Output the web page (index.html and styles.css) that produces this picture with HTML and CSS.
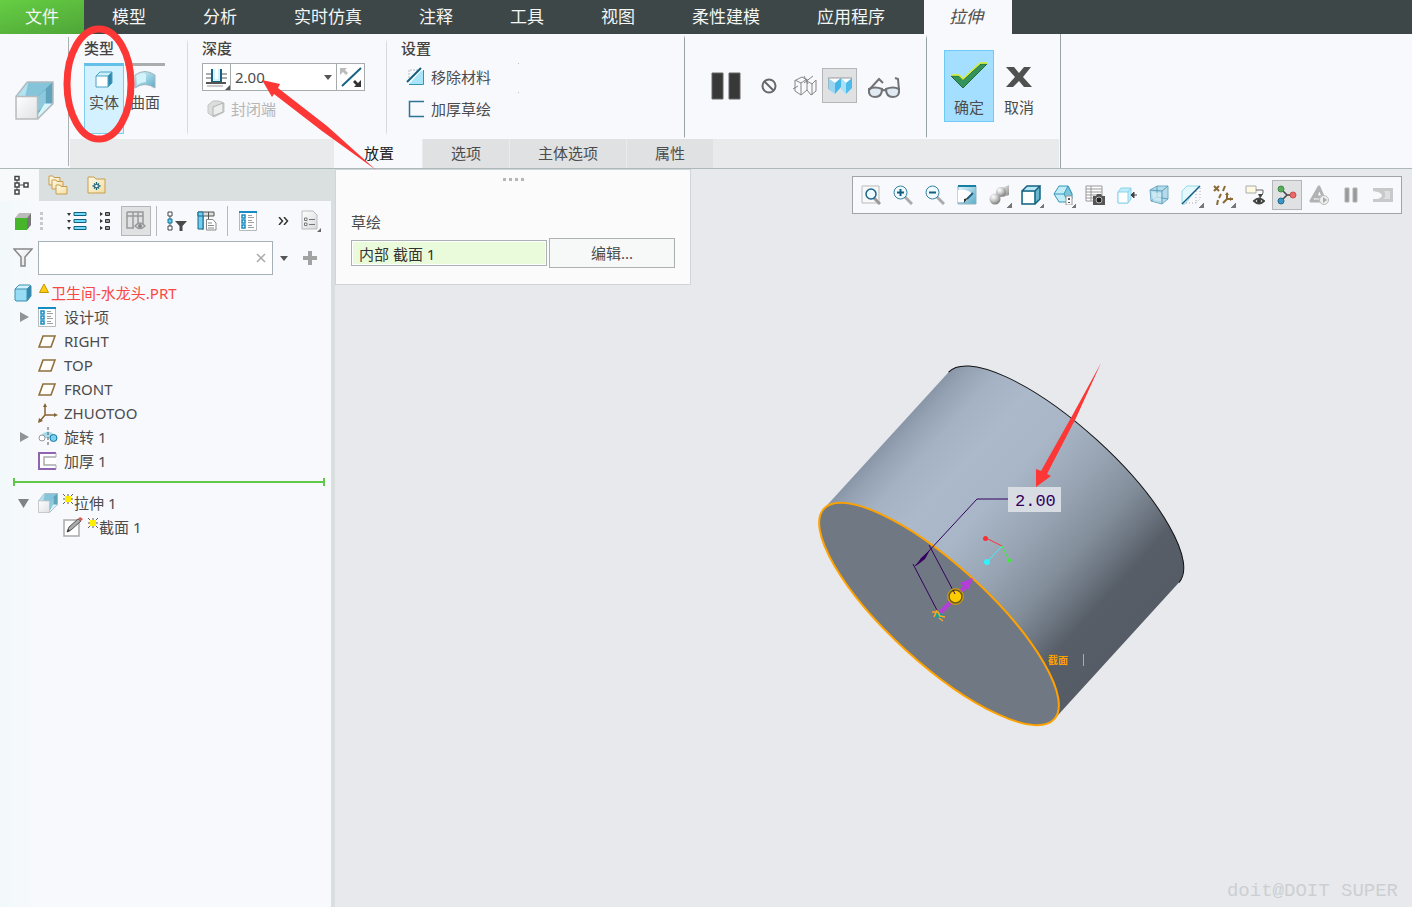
FILE: index.html
```html
<!DOCTYPE html>
<html lang="zh-CN">
<head>
<meta charset="utf-8">
<title>拉伸</title>
<link rel="stylesheet" href="styles.css">
</head>
<body>
<svg class="defs" aria-hidden="true">
  <defs>
    <linearGradient id="blueFade" x1="0" y1="0" x2="1" y2="1"><stop offset="0" stop-color="#e4f7fc"/><stop offset="1" stop-color="#59abc9"/></linearGradient>
    <linearGradient id="whiteFade" x1="0" y1="0" x2="1" y2="1"><stop offset="0" stop-color="#fff"/><stop offset="1" stop-color="#dfe1e3"/></linearGradient>
    <radialGradient id="ballFade" cx=".35" cy=".3" r=".75"><stop offset="0" stop-color="#fff"/><stop offset=".45" stop-color="#ccc"/><stop offset="1" stop-color="#777"/></radialGradient>
    <linearGradient id="greyFade" x1="0" y1="0" x2="1" y2="1"><stop offset="0" stop-color="#fff"/><stop offset="1" stop-color="#888"/></linearGradient>
    <linearGradient id="pageFade" x1="0" y1="0" x2="1" y2="1"><stop offset="0" stop-color="#fff"/><stop offset="1" stop-color="#d5dbdd"/></linearGradient>
    <linearGradient id="folderFade" x1="0" y1="0" x2="1" y2="1"><stop offset="0" stop-color="#fffbe9"/><stop offset="1" stop-color="#f3dda0"/></linearGradient>
    <linearGradient id="bodyShade" x1="0" x2="1">
      <stop offset="0" stop-color="#8896a7"/><stop offset=".04" stop-color="#94a2b4"/><stop offset=".12" stop-color="#a4b2c4"/><stop offset=".24" stop-color="#abb9cb"/><stop offset=".38" stop-color="#a8b6c7"/><stop offset=".55" stop-color="#97a3b2"/><stop offset=".69" stop-color="#838e9b"/><stop offset=".79" stop-color="#6a737e"/><stop offset=".86" stop-color="#575e68"/><stop offset="1" stop-color="#555c66"/>
    </linearGradient>
    <symbol id="extrude" viewBox="0 0 38 38">
      <path d="M12 1H37V22L22 37V15H1Z" fill="#9acfe2"/><path d="M12 1H37L22 15H1Z" fill="#b3e2f1"/><path d="M13 1H37L22 15H10Z" fill="#86c4da"/><path d="M37 1V22L22 15Z" fill="#5fa3bc"/><path d="M37 1V22L22 37V15Z" fill="#5fa3bc"/><path d="M22 15L30 8V23L22 30Z" fill="#8cc9de"/><path d="M22 37V33L29 22H37Z" fill="#d8f4fb"/><path d="M12 1H37V22L22 37M1 15L12 1" fill="none" stroke="#b2babf" stroke-width="1.5"/><path d="M1 15H22V37H1Z" fill="url(#whiteFade)" stroke="#b9bcbe" stroke-width="1.5"/>
    </symbol>
    <symbol id="cube" viewBox="0 0 18 18"><path d="M1 5L5 1H17L13 5Z" fill="#d0f2fc"/><path d="M17 1V12L13 17V5Z" fill="#3288aa"/><path d="M1 5H13V17H1Z" fill="#96dcf5"/><path d="M1 5V16L2 17H13L17 12V2L16 1H5ZM1 5H13V17M13 5L17 1" fill="none" stroke="#3f8fae"/></symbol>
    <symbol id="list" viewBox="0 0 18 20"><path d="M.5 .5H17.5V19.5H.5Z" fill="#fff" stroke="#b4babd"/><path d="M0 1H18" stroke="#168cc4" stroke-width="2"/><g fill="#fff" stroke="#168cc4" stroke-width="1.5"><path d="M3 4H6V7H3ZM3 9H6V12H3ZM3 14H6V17H3Z"/></g><path d="M9 4.500H13M9 6.500H15M9 9.500H13M9 11.500H15M9 14.500H13M9 16.500H15" stroke="#9ba1a5"/></symbol>
    <symbol id="plane" viewBox="0 0 18 13"><path d="M5 1H17L13 12H1Z" fill="#fffefa" stroke="#8f6f3d" stroke-width="1.6"/></symbol>
    <symbol id="spark" viewBox="0 0 10 10"><path d="M5 0V10M0 5H10M0 0L10 10M10 0L0 10" stroke="#5f5f4c" stroke-width="1"/><path d="M2 2H8V8H2Z" fill="#ffee00"/></symbol>
    <symbol id="corner" viewBox="0 0 5 5"><path d="M5 0V5H0Z" fill="#686868"/></symbol>
    <symbol id="folder" viewBox="0 0 13 11"><path d="M1 2V1H5L6 2.500H12V10H1Z" fill="url(#folderFade)" stroke="#c69d50"/></symbol>
  </defs>
</svg>

<div class="app">
  <nav class="menu">
    <a class="menu-item file" href="#">文件</a><a class="menu-item" href="#">模型</a><a class="menu-item" href="#">分析</a><a class="menu-item" href="#">实时仿真</a><a class="menu-item" href="#">注释</a><a class="menu-item" href="#">工具</a><a class="menu-item" href="#">视图</a><a class="menu-item" href="#">柔性建模</a><a class="menu-item" href="#">应用程序</a><a class="menu-item current" href="#">拉伸</a>
  </nav>

  <header class="ribbon">
    <div class="feature"><svg width="39" height="39"><use href="#extrude"/></svg></div>
    <div class="dashboard">
      <div class="groups">
        <section class="group kind">
          <h2>类型</h2>
          <div class="kinds">
            <button class="kind-btn on"><svg width="18" height="18" viewBox="0 0 18 18"><path d="M1 5L5 1H17L13 5Z" fill="#cdeffc"/><path d="M17 1V12L13 16V5Z" fill="#3288aa"/><path d="M1 5H13V16H1Z" fill="#fff"/><path d="M1 5V16H13L17 12V1H5ZM1 5H13V16M13 5L17 1" fill="none" stroke="#48a3c2"/></svg>实体</button>
            <button class="kind-btn"><svg width="22" height="18" viewBox="0 0 22 18"><path d="M1 17V4Q11-3 21 4V17Q11 10 1 17Z" fill="url(#blueFade)" stroke="#9eb6c0"/><path d="M3 14V5Q8 1 12 3V11Q7 11 3 14Z" fill="#d3f4fb"/></svg>曲面</button>
          </div>
        </section>
        <section class="group depth">
          <h2>深度</h2>
          <div class="combo">
            <button class="depth-type" aria-label="深度类型"><svg width="27" height="26" viewBox="0 0 27 26"><path d="M3 10H24M3 14H24" stroke="#a9adaf" stroke-width="2"/><path d="M9 5V18H18V5" fill="#fff" stroke="#16617f" stroke-width="2"/><path d="M11 5V16H16V5" fill="none" stroke="#a5e6fa"/><path d="M3 19H23" stroke="#555" stroke-width="2"/><path d="M4 22H20" stroke="#999"/><path d="M27 21V26H22Z" fill="#555"/></svg></button>
            <input value="2.00" aria-label="深度值">
            <button class="drop" aria-label="展开"><svg width="8" height="5"><path d="M0 0H8L4 5Z" fill="#555"/></svg></button>
            <button class="flip" aria-label="反向"><svg width="26" height="24" viewBox="0 0 26 24"><path d="M4 21L23 3" stroke="#176486" stroke-width="2"/><path d="M2 3H9L7 5L10 8L8 10L5 7L2 10Z" fill="#bbb"/><path d="M23 22H16L18 20L15 17L17 15L20 18L23 15Z" fill="#333"/></svg></button>
          </div>
          <button class="line-btn" disabled><svg width="18" height="18" viewBox="0 0 18 18"><path d="M1 5L6 1Q12 0 17 3V12L7 17L1 13Z" fill="#dcdddd" stroke="#c4c5c6"/><path d="M6 7L16 3V12L6 16Z" fill="#ededee" stroke="#b0b1b2"/></svg>封闭端</button>
        </section>
        <section class="group setup">
          <h2>设置</h2>
          <div class="setup-row">
            <div>
              <button class="line-btn"><svg width="19" height="20" viewBox="0 0 19 20"><path d="M3 14V3H12" fill="none" stroke="#bbb" stroke-dasharray="2 1"/><path d="M5 15L15 4H17V17H3Z" fill="#a9e5f8"/><path d="M17.500 3V17.500H3" fill="none" stroke="#3692b5"/><path d="M1 15L15 1" stroke="#14607e" stroke-width="2"/></svg>移除材料</button>
              <button class="line-btn"><svg width="19" height="18" viewBox="0 0 19 18"><path d="M18 1.500H3.500V16.500H18" fill="none" stroke="#2a7597" stroke-width="1.500"/></svg>加厚草绘</button>
            </div>
            <i class="dots"></i>
          </div>
        </section>
        <section class="group controls">
          <button class="tool pause" aria-label="暂停"><svg width="30" height="28"><path d="M1 1H12V27H1ZM18 1H29V27H18Z" fill="#383838" stroke="#666"/></svg></button>
          <button class="tool small" aria-label="无预览"><svg width="16" height="16"><circle cx="8" cy="8" r="6.500" fill="none" stroke="#686868" stroke-width="2"/><path d="M3 3L13 13" stroke="#686868" stroke-width="2"/></svg></button>
          <button class="tool xray" aria-label="分离"><svg width="26" height="22" viewBox="0 0 26 22"><path d="M3 5L9 8L15 4V15L9 20L3 16ZM9 8V20M4 5L10 2L15 5M15 6L20 9L24 5V16L19 20L15 15M20 9V20M12 1L16 9M21 1L12 8M1 14L6 11" fill="none" stroke="#858585"/></svg></button>
          <button class="tool on" aria-label="连接"><svg width="24" height="18" viewBox="0 0 24 18"><path d="M0 1H13L7 6ZM13 1H24L18 6Z" fill="#fff"/><path d="M0 1L7 6V17L0 12Z" fill="#98d5f0"/><path d="M13 1V10L7 17V6Z" fill="#46b5e7"/><path d="M13 1L18 6V17L13 12Z" fill="#a8e0f5"/><path d="M24 1V11L18 17V6Z" fill="#4dbceb"/><path d="M0 1H24M0 1V12M24 1V11" stroke="#999"/></svg></button>
          <button class="tool glasses" aria-label="预览"><svg width="34" height="22" viewBox="0 0 34 22"><path d="M2 12Q8 9 15 12Q15 20 8 20Q1 20 2 12ZM19 12Q26 9 32 12Q33 20 26 20Q19 20 19 12Z" fill="#e1eaf2" stroke="#707375" stroke-width="2"/><path d="M15 14Q17 12 19 14M2 13L12 2L16 6M32 13L31 2L28 1" fill="none" stroke="#707375" stroke-width="2"/></svg></button>
        </section>
        <section class="group finish">
          <button class="final ok"><svg width="38" height="28" viewBox="0 0 38 28"><path d="M1 14H9L13 18L31 2H37L13 26Z" fill="#32945a" stroke="#296b35"/><path d="M1 13H9L13 17L30 1H37" fill="none" stroke="#d6ef29" stroke-width="1.500"/></svg>确定</button>
          <button class="final"><svg width="26" height="22" viewBox="0 0 26 22"><path d="M0 1H8L13 7L18 1H25L17 11L26 21H18L13 15L7 21H0L9 11Z" fill="#505050"/></svg>取消</button>
        </section>
      </div>
      <div class="subtabs">
        <button class="subtab current">放置</button><button class="subtab">选项</button><button class="subtab">主体选项</button><button class="subtab">属性</button>
      </div>
    </div>
    <svg class="mark" width="380" height="171" viewBox="0 0 380 171" aria-hidden="true"><ellipse cx="99" cy="84" rx="32" ry="55" fill="none" stroke="#fc3735" stroke-width="7"/><path d="M262 80L280 84L278 88L327 126L376 170L322 131L274 94L272 97Z" fill="#fc3735"/></svg>
  </header>

  <main class="work">
    <aside class="side">
      <div class="side-tabs">
        <button class="side-tab current" aria-label="模型树"><svg width="16" height="20" viewBox="0 0 16 20"><path d="M4 3V17M4 10H12" stroke="#555"/><g fill="#fff" stroke="#444" stroke-width="1.500"><path d="M2 1.500H6V5H2ZM2 8H6V12H2ZM2 15H6V19H2ZM11 8H15V12H11Z"/></g></svg></button>
        <button class="side-tab" aria-label="文件夹"><svg width="20" height="20" viewBox="0 0 20 20"><use href="#folder" width="13" height="11"/><use href="#folder" x="3" y="4" width="13" height="11"/><use href="#folder" x="7" y="9" width="13" height="11"/></svg></button>
        <button class="side-tab" aria-label="收藏夹"><svg width="19" height="18" viewBox="0 0 19 18"><path d="M1 3V1H7L9 3H18V17H1Z" fill="url(#folderFade)" stroke="#c69d50"/><path d="M9.500 6V14M5.500 10H13.500M7 7.500L12 12.500M12 7.500L7 12.500" stroke="#1b6381" stroke-width="1.300"/><circle cx="9.500" cy="10" r="1.300" fill="#fff"/></svg></button>
      </div>
      <div class="side-tools">
        <button class="tool" aria-label="模型"><svg width="16" height="18" viewBox="0 0 16 18"><path d="M0 6L4 1H16L12 6Z" fill="#bbb"/><path d="M12 6L16 1V13L12 18Z" fill="#777"/><path d="M0 6H12V18H0Z" fill="#47b52a"/></svg></button>
        <i class="grip"></i>
        <button class="tool" aria-label="全部展开"><svg width="20" height="20" viewBox="0 0 20 20"><path d="M0 2H4L2 5ZM0 9H4L2 12ZM0 16H4L2 19Z" fill="#333"/><path d="M7 1.500H19V4.500H7ZM7 8.500H19V11.500H7ZM7 15.500H19V18.500H7Z" fill="#72dafa" stroke="#135f7e"/></svg></button>
        <button class="tool narrow" aria-label="全部折叠"><svg width="12" height="20" viewBox="0 0 12 20"><path d="M1 1L4 3L1 5ZM1 8L4 10L1 12ZM1 15L4 17L1 19Z" fill="#333"/><path d="M6.500 1.500H10.500V4.500H6.500ZM6.500 8.500H10.500V11.500H6.500ZM6.500 15.500H10.500V18.500H6.500Z" fill="#999" stroke="#333"/></svg></button>
        <button class="tool on spaced" aria-label="树列"><svg width="20" height="20" viewBox="0 0 20 20"><path d="M1 1H17V13M1 1V17H8M1 5H17M7 1V17M12 1V12" fill="none" stroke="#999" stroke-width="1.500"/><path d="M9 15Q14 9 19 15Q14 20 9 15Z" fill="#ddd" stroke="#999" stroke-width="1.500"/><circle cx="14" cy="15" r="2" fill="#888"/></svg></button>
        <i class="rule"></i>
        <button class="tool" aria-label="树过滤器"><svg width="20" height="20" viewBox="0 0 20 20"><path d="M3 3V18" stroke="#555"/><path d="M1 1H5V5H1ZM1 15H5V19H1Z" fill="#fff" stroke="#444"/><path d="M1 8H5V12H1Z" fill="#68c9ed" stroke="#11779e"/><path d="M8 10H20L15.500 15V20H12.500V15Z" fill="#4a4a4a"/></svg></button>
        <button class="tool" aria-label="树设置"><svg width="20" height="20" viewBox="0 0 20 20"><path d="M1 1H17V5H1ZM6 5V19M11.500 1V9" fill="#ddd" stroke="#555"/><path d="M1 1H6V18H1Z" fill="#70cef0" stroke="#166788"/><path d="M1 5H6" stroke="#166788"/><path d="M9.500 8.500H16L19 12V19H9.500Z" fill="#fff" stroke="#888"/><path d="M11 12H15M11 14.500H17M11 17H17" stroke="#888"/></svg></button>
        <i class="rule"></i>
        <button class="tool" aria-label="设计项"><svg width="18" height="20"><use href="#list"/></svg></button>
        <button class="tool narrow more" aria-label="更多"><svg width="11" height="8" viewBox="0 0 11 8"><path d="M1 0L4.500 4L1 8M6 0L9.500 4L6 8" fill="none" stroke="#333" stroke-width="1.500"/></svg></button>
        <button class="tool" aria-label="树选项"><svg width="20" height="22" viewBox="0 0 20 22"><path d="M1 1H12L16 5V19H1Z" fill="url(#pageFade)" stroke="#bbb"/><path d="M8 9.500H14M8 14.500H14" stroke="#777"/><path d="M3.500 8H6V10.500H3.500ZM3.500 13H6V15.500H3.500Z" fill="#fff" stroke="#777"/><use href="#corner" x="16" y="18" width="4" height="4"/></svg></button>
      </div>
      <div class="search">
        <button class="tool" aria-label="过滤"><svg width="20" height="20" viewBox="0 0 20 20"><path d="M1 1H19L12 9V18H8V9Z" fill="url(#whiteFade)" stroke="#888" stroke-width="1.500"/></svg></button>
        <div class="field"><input aria-label="搜索模型树"><button aria-label="清除"><svg width="10" height="10"><path d="M1 1L9 9M9 1L1 9" stroke="#aaa" stroke-width="1.500"/></svg></button></div>
        <button class="tool drop-btn" aria-label="搜索选项"><svg width="8" height="5"><path d="M0 0H8L4 5Z" fill="#555"/></svg></button>
        <button class="tool" aria-label="添加"><svg width="14" height="14"><path d="M5 0H9V5H14V9H9V14H5V9H0V5H5Z" fill="#a2a2a2"/></svg></button>
      </div>
      <ul class="tree">
        <li class="root"><svg width="18" height="18"><use href="#cube"/></svg><svg class="warn" width="10" height="10"><path d="M5 1L9.500 9.500H.5Z" fill="#ffcc13" stroke="#c59500"/></svg><span>卫生间-水龙头.PRT</span></li>
        <li><svg class="twist" width="10" height="12"><path d="M1 1L10 6L1 11Z" fill="#909395"/></svg><span class="ico"><svg width="18" height="20"><use href="#list"/></svg></span>设计项</li>
        <li><i class="twist"></i><span class="ico"><svg width="18" height="13"><use href="#plane"/></svg></span>RIGHT</li>
        <li><i class="twist"></i><span class="ico"><svg width="18" height="13"><use href="#plane"/></svg></span>TOP</li>
        <li><i class="twist"></i><span class="ico"><svg width="18" height="13"><use href="#plane"/></svg></span>FRONT</li>
        <li><i class="twist"></i><span class="ico"><svg width="20" height="20" viewBox="0 0 20 20"><path d="M7 2V12H18M7 12L2 18" fill="none" stroke="#866332" stroke-width="1.500"/><path d="M7 0L9 4H5ZM20 12L16 10V14ZM0 20L1 15L5 18Z" fill="#866332"/></svg></span>ZHUOTOO</li>
        <li><svg class="twist" width="10" height="12"><path d="M1 1L10 6L1 11Z" fill="#909395"/></svg><span class="ico"><svg width="20" height="20" viewBox="0 0 20 20"><path d="M3 8Q10 1 17 8L12 11H7Z" fill="#a4dcec"/><path d="M10 0V20" stroke="#555" stroke-dasharray="3 2"/><circle cx="4" cy="11" r="3" fill="#fff" stroke="#999"/><circle cx="15.500" cy="11" r="3.500" fill="#7ad1f2" stroke="#17799f"/></svg></span>旋转 1</li>
        <li><i class="twist"></i><span class="ico"><svg width="20" height="18" viewBox="0 0 20 18"><path d="M18 1H1V17H18" fill="#fff" stroke="#8f65b1" stroke-width="2"/><path d="M18 5H6V13H18" fill="#fff" stroke="#aaa" stroke-width="1.500"/><path d="M18 1V5M18 13V17" stroke="#aaa"/></svg></span>加厚 1</li>
        <li class="insert" aria-label="在此插入"></li>
        <li><svg class="twist" width="10" height="9" viewBox="0 0 10 9"><path d="M-1 0H10L4.500 9Z" fill="#808385"/></svg><span class="ico"><svg width="20" height="20"><use href="#extrude"/></svg></span><svg class="new" width="10" height="10"><use href="#spark"/></svg>拉伸 1</li>
        <li class="child"><span class="ico"><svg width="20" height="20" viewBox="0 0 20 20"><path d="M1 3H16V19H1Z" fill="#fff" stroke="#aaa" stroke-width="1.500"/><path d="M4 15L6 10L15 2L18 4L8 13Z" fill="#aaa" stroke="#555"/><path d="M4 15L5 12L7 14Z" fill="#333"/><path d="M15 2L17 0L20 2L18 4Z" fill="#d45d50"/></svg></span><svg class="new" width="10" height="10"><use href="#spark"/></svg>截面 1</li>
      </ul>
    </aside>

    <section class="canvas">
      <svg class="scene" viewBox="335 169 1077 738" preserveAspectRatio="xMidYMid meet">
        <g transform="translate(939 614) rotate(42.400)">
          <path d="M-156 0V-185A156 50 0 0 1 156-185V0Z" fill="url(#bodyShade)"/>
          <path d="M-156-185A156 50 0 0 1 156-185" fill="none" stroke="#111" stroke-width="1"/>
          <ellipse rx="156" ry="49" fill="#707883" stroke="#ffa200" stroke-width="2"/>
        </g>
        <path d="M1008 499H977L915 566M913 564L939 614M929 545L955 594" fill="none" stroke="#360060" stroke-width="1"/>
        <path d="M916 566L921 558L930 550L925 559Z" fill="#360060"/>
        <path d="M940 613L966 586" stroke="#b63dda" stroke-width="4"/><path d="M973 578L960 583L968 590Z" fill="#b63dda"/>
        <path d="M935 618L938 612L944 617M937 612L941 620" stroke="#13a39d" fill="none" stroke-width="2"/><path d="M932 612H938L940 616L945 617M937 610L934 617M939 618L943 621" fill="none" stroke="#ffa51e" stroke-width="1.500"/>
        <circle cx="955.500" cy="596.500" r="8" fill="#ddb21b" stroke="#bc9619"/><circle cx="955.500" cy="596.500" r="6.500" fill="#ffcc00" stroke="#6b591e" stroke-width="1.500"/><path d="M953 590L955 594" stroke="#360060"/>
        <path d="M986 538L1002 546" stroke="#ff3434"/><path d="M1002 546L987 562" stroke="#36f5f4"/><path d="M1002 546L1009 560" stroke="#36ef39"/>
        <circle cx="985.500" cy="538.500" r="2.500" fill="#fb3035"/><circle cx="987" cy="562" r="3" fill="#2ff3fc"/><circle cx="1009" cy="560.500" r="2" fill="#3bee31"/>
        <text class="section-label" x="1048" y="664">截面</text><path d="M1083.500 654V666" stroke="#ffa200"/>
        <path d="M1008 487H1061V512H1008Z" fill="#d8dde4"/><text class="dimension" x="1015" y="506">2.00</text>
        <path d="M1101 363L1072 416L1041 471L1036 469V487L1051 476L1047 474L1076 418Z" fill="#fc3735"/>
      </svg>

      <form class="placement">
        <i class="handle"></i>
        <label for="sketch">草绘</label>
        <div class="placement-row"><input id="sketch" value="内部 截面 1"><button type="button">编辑...</button></div>
      </form>

      <div class="view-tools">
        <button class="tool" aria-label="重新调整"><svg width="20" height="20" viewBox="0 0 20 20"><path d="M1 1H18V18H1Z" fill="#f8f8f8" stroke="#bbb"/><path d="M13 13L19 19" stroke="#999" stroke-width="3"/><circle cx="10" cy="9" r="5" fill="#eefaff" stroke="#176689" stroke-width="1.500"/></svg></button>
        <button class="tool" aria-label="放大"><svg width="20" height="20" viewBox="0 0 20 20"><path d="M12 12L19 19" stroke="#aaa" stroke-width="3"/><circle cx="7.500" cy="7.500" r="6.500" fill="#effaff" stroke="#36839f"/><path d="M4 7.500H11M7.500 4V11" stroke="#135e80" stroke-width="2"/></svg></button>
        <button class="tool" aria-label="缩小"><svg width="20" height="20" viewBox="0 0 20 20"><path d="M12 12L19 19" stroke="#aaa" stroke-width="3"/><circle cx="7.500" cy="7.500" r="6.500" fill="#effaff" stroke="#36839f"/><path d="M4 7.500H11" stroke="#135e80" stroke-width="2"/></svg></button>
        <button class="tool" aria-label="重画"><svg width="20" height="20" viewBox="0 0 20 20"><path d="M1 1H19V19H1Z" fill="url(#blueFade)" stroke="#8fb3c0"/><path d="M1 5Q11 4 15 9L8 17H1Z" fill="#fff"/><path d="M16 8L10 14" stroke="#175f7e" stroke-width="2"/><path d="M11 13L7 18L7 14Z" fill="#333"/><path d="M1 1H19" stroke="#167ea5" stroke-width="2"/></svg></button>
        <button class="tool flyout" aria-label="渲染"><svg width="20" height="20" viewBox="0 0 20 20"><path d="M11 4L20 0V10L14 12Z" fill="url(#greyFade)"/><circle cx="12" cy="7" r="5" fill="url(#ballFade)"/><circle cx="6" cy="14" r="5.500" fill="url(#ballFade)"/></svg></button>
        <button class="tool flyout" aria-label="显示样式"><svg width="20" height="20" viewBox="0 0 20 20"><path d="M1 6L6 1H19V14L14 19H1Z" fill="#b5e8f6"/><path d="M19 1V14L14 19V6Z" fill="#68b7cf"/><path d="M1 6H14V19H1ZM1 6L6 1H19L14 6M19 1V14L14 19" fill="none" stroke="#17617f" stroke-width="1.500"/><path d="M2 7H13V18H2Z" fill="#fff"/></svg></button>
        <button class="tool flyout" aria-label="已保存方向"><svg width="20" height="20" viewBox="0 0 20 20"><path d="M1 9L6 1H15L19 9L15 17H6Z" fill="#c2edf7" stroke="#3597b8"/><path d="M1 9H11L15 1L19 9V14L15 17L11 9" fill="#7bc6db" stroke="#3597b8"/><path d="M13 11H19V20H13Z" fill="#fff" stroke="#999"/><path d="M16 13V15M16 17V18" stroke="#555" stroke-width="2"/></svg></button>
        <button class="tool" aria-label="视图管理器"><svg width="20" height="20" viewBox="0 0 20 20"><path d="M1 1H17V16H1ZM1 4H17M1 7H17M1 10H17M1 13H17M6 1V16" fill="#fff" stroke="#999"/><path d="M8 11H11L12 9H16L17 11H20V20H8Z" fill="#555"/><circle cx="14" cy="15" r="3" fill="#222" stroke="#bbb"/></svg></button>
        <button class="tool" aria-label="截面"><svg width="20" height="18" viewBox="0 0 20 18"><path d="M1 6L4 2H14V13L11 17H1Z" fill="#c0edf9" stroke="#88d3ea"/><path d="M1 6H11V17H1ZM11 6L14 2" fill="#fff" stroke="#88d3ea"/><path d="M14 9H20M14 9L17 6V12Z" fill="#444" stroke="#444"/></svg></button>
        <button class="tool" aria-label="透视图"><svg width="20" height="20" viewBox="0 0 20 20"><path d="M1 5L8 1H19V14L13 19L2 16Z" fill="#b5dbeb" stroke="#72abc3"/><path d="M1 5L13 6V19M13 6L19 1M2 16L8 12L19 14M8 12V1" fill="none" stroke="#5d9fba"/><path d="M3 7L12 8V16L4 15Z" fill="#d5f0f8" opacity=".7"/></svg></button>
        <button class="tool flyout" aria-label="剪切"><svg width="20" height="20" viewBox="0 0 20 20"><path d="M1 6L6 1H18L4 19H1Z" fill="#e4f9fd" stroke="#94d8ea"/><path d="M15 6V18H4M19 3V14L15 18" fill="none" stroke="#aaa" stroke-dasharray="1 2"/><path d="M1 19L19 1" stroke="#165f80" stroke-width="1.500"/></svg></button>
        <button class="tool flyout" aria-label="基准显示"><svg width="20" height="20" viewBox="0 0 20 20"><path d="M1 1L6 6M6 1L1 6M12 1L10 6M8 9L6 13M5 15L4 20M14 8V14H20M14 14L10 18" fill="none" stroke="#8a6a34" stroke-width="2"/><path d="M14 7L16 10H12ZM20 14L17 12V16Z" fill="#8a6a34"/></svg></button>
        <button class="tool" aria-label="注释显示"><svg width="20" height="20" viewBox="0 0 20 20"><path d="M1 1H11V8H1Z" fill="#fff9e2" stroke="#aaa"/><path d="M11 5H18V8L15 13" fill="none" stroke="#666"/><path d="M13 9H18L15 13Z" fill="#444"/><path d="M9 16Q14 11 19 16Q14 21 9 16Z" fill="#fff" stroke="#444" stroke-width="2"/><circle cx="14" cy="16" r="2" fill="#333"/></svg></button>
        <button class="tool on" aria-label="旋转中心"><svg width="20" height="20" viewBox="0 0 20 20"><path d="M4 4L10 10L4 16M10 10H16" fill="none" stroke="#444" stroke-width="1.500"/><circle cx="4" cy="4" r="3" fill="#57ad59" stroke="#468949"/><circle cx="4" cy="16" r="3" fill="#3897c7" stroke="#27698b"/><circle cx="16" cy="10" r="3" fill="#ed6966" stroke="#c25250"/></svg></button>
        <button class="tool" aria-label="模拟"><svg width="20" height="20" viewBox="0 0 20 20"><path d="M10 2L2 16H16L10 2L7 12H13" fill="none" stroke="#b0b2b4" stroke-width="3" stroke-linejoin="round"/><circle cx="15" cy="15" r="4.500" fill="#eee" stroke="#bbb"/><path d="M14 12L18 15L14 18Z" fill="#aaa"/></svg></button>
        <button class="tool" aria-label="暂停模拟"><svg width="16" height="16"><path d="M2 1H6V15H2ZM10 1H14V15H10Z" fill="#999" stroke="#b4b4b4"/></svg></button>
        <button class="tool" aria-label="结果"><svg width="20" height="16" viewBox="0 0 20 16"><path d="M0 1H20V15H0V12H4Q9 11 9 8Q8 5 0 4Z" fill="#c8c9cb"/><path d="M11 4H17V12H10Q14 9 11 4Z" fill="#dedfe0"/></svg></button>
      </div>
      <p class="credit">doit@DOIT SUPER</p>
    </section>
  </main>
</div>
</body>
</html>
```

FILE: styles.css
```css
* { box-sizing: border-box; }
body { margin: 0; font: 15px/20px "Noto Sans", "Noto Sans CJK SC", sans-serif; color: #4c4c4c; background: #e8e9ed; }
button, input { font: inherit; color: inherit; margin: 0; padding: 0; border: 0; background: none; border-radius: 0; }
svg { display: block; flex: none; }
.defs { position: absolute; width: 0; height: 0; }
.app { min-height: 100vh; display: flex; flex-direction: column; }

.menu { display: flex; height: 34px; background: #3d4747; }
.menu-item { padding: 0 29px 0 28px; font-size: 17px; line-height: 33px; color: #f4f5f5; text-decoration: none; white-space: nowrap; }
.menu-item.file { width: 84px; padding: 0; text-align: center; background: linear-gradient(165deg, #66ce43, #4ea538); }
.menu-item.current { width: 88px; margin-left: 10px; padding: 0 4px 0 0; text-align: center; font-style: italic; color: #4c4c4c; background: #f8f9fc; }

.ribbon { position: relative; display: flex; background: #f8f9fc; border-bottom: 1px solid #abb9b9; }
.feature { width: 69px; margin: 3px 0 2px; padding: 44px 0 0 15px; border-right: 1px solid #abb0b2; }
.dashboard { display: flex; flex-direction: column; padding-left: 1px; border-right: 1px solid #9aa3a5; }
.groups { display: flex; height: 105px; }
.group { padding: 4px 14px 0; }
.group + .group { border-left: 1px solid transparent; border-image: linear-gradient(#f8f9fc 5%, #d8dadc 10%, #d8dadc 92%, #f8f9fc 96%) 1; }
.group h2 { margin: 0 0 5px; font-size: 15px; font-weight: 500; line-height: 20px; color: #444; }
.kind { width: 117px; }
.kinds { display: flex; gap: 1px; }
.kind-btn { width: 40px; height: 71px; padding-top: 5px; border-top: 3px solid #aaacae; display: flex; flex-direction: column; align-items: center; justify-content: flex-start; gap: 3px; line-height: 20px; white-space: nowrap; }
.kind-btn.on { background: #d4f1ff; border: 1px solid #7dccf1; border-top: 3px solid #64bfe9; }
.depth { width: 199px; }
.combo { display: flex; height: 28px; border: 1px solid #a6abad; background: #fff; width: 163px; margin-bottom: 8px; }
.depth-type { border-right: 1px solid #a6abad; }
.combo input { width: 89px; padding-left: 4px; }
.drop { flex: 1; display: grid; place-items: center; }
.flip { width: 28px; border-left: 1px solid #a6abad; display: grid; place-items: center; }
.line-btn { display: flex; align-items: center; gap: 6px; height: 20px; margin-left: 5px; white-space: nowrap; }
.line-btn:disabled { color: #b3b5b7; }
.setup { width: 298px; }
.setup-row { display: flex; gap: 27px; padding-top: 4px; }
.setup-row .line-btn + .line-btn { margin-top: 12px; }
.dots { width: 1px; height: 30px; margin-top: -4px; border-top: 1px solid #bbb; border-bottom: 1px solid #bbb; }
.group.controls, .group.finish { border-image: linear-gradient(#f8f9fc 2%, #9aa2a5 5%, #9aa2a5 97%, #f8f9fc 98%) 1; }
.controls { width: 242px; padding: 0 20px 2px 23px; display: flex; align-items: center; gap: 4px; }
.tool { width: 30px; height: 30px; flex: none; display: grid; place-items: center; }
.tool.on { background: #dfe1e3; border: 1px solid #b4b6b8; }
.controls .tool { width: 35px; height: 35px; }
.controls .small { width: 24px; margin-left: 10px; }
.controls .xray { width: 31px; margin-left: 4px; }
.controls .tool.on { margin-left: -2px; }
.controls .glasses { margin-left: 5px; padding-top: 4px; }
.finish { display: flex; align-items: flex-start; padding: 16px 16px 0 17px; }
.final { width: 50px; height: 72px; padding-bottom: 4px; display: flex; flex-direction: column; align-items: center; justify-content: flex-end; gap: 7px; border: 1px solid transparent; }
.final:last-child { gap: 9px; }
.final.ok { background: #a4dfff; border-color: #6ecbf9; }
.subtabs { display: flex; gap: 1px; height: 29px; margin-right: 1px; padding-left: 264px; background: #e9eaec; }
.subtab { padding: 0 28px; background: #dfe1e2; line-height: 29px; white-space: nowrap; }
.subtab.current { padding: 0 28px 0 30px; background: #f8f9fc; color: #222; }
.mark { position: absolute; left: 0; top: -34px; z-index: 2; pointer-events: none; }

.work { flex: 1; display: flex; }
.side { width: 335px; border-right: 4px solid #d9dfdf; background: linear-gradient(90deg, #f2f9fb, #f8f9fc 12%); }
.side-tabs { display: flex; height: 32px; background: #dae0df; }
.side-tab { width: 38px; display: grid; place-items: center; }
.side-tab.current { width: 39px; padding-left: 2px; background: #f7f9fb; }
.side-tools { display: flex; align-items: center; height: 40px; padding-left: 8px; }
.grip { width: 3px; height: 18px; margin: 0 19px 0 2px; background: repeating-linear-gradient(#c8caca 0 3px, transparent 3px 5px); }
.tool.narrow { width: 26px; }
.tool.spaced { margin-left: 3px; }
.tool.more { margin-left: 7px; }
.rule { width: 1px; height: 30px; margin: 0 5px; background: #b4babc; }
.search { display: flex; align-items: center; height: 34px; padding-left: 8px; }
.field { display: flex; align-items: center; width: 235px; height: 34px; border: 1px solid #a5b1b6; background: #fff; }
.field input { flex: 1; min-width: 0; height: 30px; padding: 0 6px; outline: 0; }
.field button { padding: 6px; }
.search .drop-btn { width: 22px; }
.tree { list-style: none; margin: 0; padding: 6px 0; }
.tree li { display: flex; align-items: center; height: 24px; padding-left: 19px; white-space: nowrap; }
.tree .root { padding-left: 14px; color: #fa4743; }
.warn { margin: -10px 0 0 7px; }
.root span { margin-left: 2px; }
.twist { width: 12px; margin-right: 7px; overflow: visible; }
svg.twist { width: 10px; margin-right: 9px; }
.ico { width: 20px; margin-right: 6px; }
.new { margin: -8px 1px 0 -1px; }
.tree .child { padding-left: 63px; }
.tree .insert { height: 8px; margin: 5px 6px 5px 13px; padding: 0; border: solid #61c94a; border-width: 0 2px; background: linear-gradient(#61c94a, #61c94a) center / 100% 2px no-repeat; }

.canvas { position: relative; flex: 1; min-width: 0; overflow: hidden; background: #e8e9ed; }
.scene { position: absolute; inset: 0; width: 100%; height: 100%; }
.section-label { font: 700 10px "Noto Sans CJK SC", sans-serif; fill: #ffa200; }
.dimension { font: 17px "Liberation Mono", monospace; fill: #360060; }
.placement { position: absolute; left: 0; top: 0; width: 356px; padding: 8px 15px 16px; border: 1px solid #d0d6d7; background: #fbfbfb; }
.handle { display: block; width: 21px; height: 3px; margin: 0 auto 31px; background: repeating-linear-gradient(90deg, #b5b5b5 0 3px, transparent 3px 6px); }
.placement label { display: block; line-height: 20px; margin-bottom: 6px; }
.placement-row { display: flex; align-items: center; gap: 2px; }
.placement input { width: 196px; height: 26px; padding: 0 7px; border: 1px solid #aab0b3; box-shadow: inset 0 0 0 1px #fff; background: #eafbdc; color: #333; }
.placement button { flex: 1; height: 30px; border: 1px solid #adb0b2; background: #f7f8f8; }
.view-tools { position: absolute; top: 7px; right: 10px; display: flex; align-items: center; gap: 2px; height: 38px; padding: 0 3px; border: 1px solid #a1a4a7; background: #f8f9fc; }
.flyout { position: relative; }
.flyout::after { content: ""; position: absolute; right: 2px; bottom: 2px; width: 5px; height: 5px; background: linear-gradient(135deg, transparent 50%, #777 50%); }
.credit { position: absolute; right: 14px; bottom: 3px; margin: 0; font: 19px/26px "Liberation Mono", monospace; color: #cccfd1; }
```
